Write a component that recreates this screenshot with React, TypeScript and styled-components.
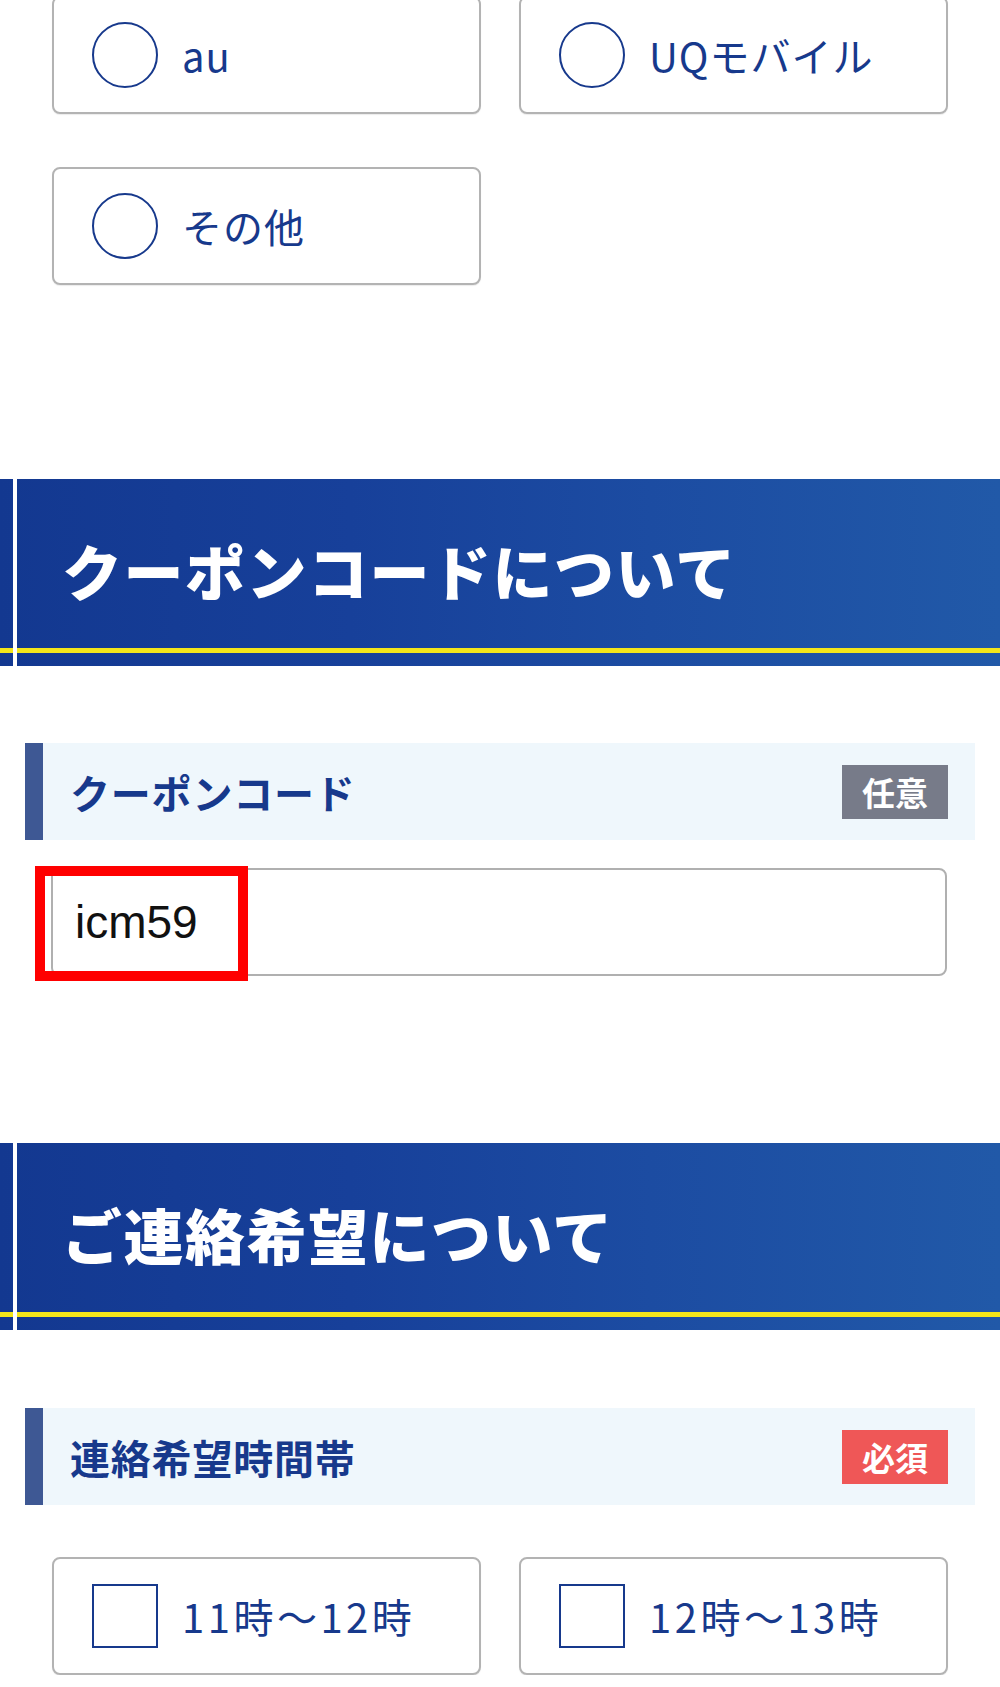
import React from "react";
import styled, { createGlobalStyle, css } from "styled-components";

const GlobalStyle = createGlobalStyle`
  html, body {
    margin: 0;
    padding: 0;
    background: #ffffff;
  }
  body {
    font-family: "Noto Sans CJK JP", "Noto Sans", sans-serif;
    color: #17398c;
  }
  * { box-sizing: border-box; }
`;

const Page = styled.div`
  width: 1000px;
  display: flex;
  flex-direction: column;
  overflow: hidden;
`;

const OptionGrid = styled.div<{ $mt: number }>`
  display: grid;
  grid-template-columns: 429px 429px;
  column-gap: 38px;
  row-gap: 53px;
  padding: 0 53px 0 52px;
  margin-top: ${(p) => p.$mt}px;
`;

const OptionBox = styled.label`
  height: 118px;
  border: 2px solid #b3b3b3;
  border-radius: 8px;
  background: #fff;
  display: flex;
  align-items: center;
  padding-left: 38px;
  box-shadow: 0 1px 1px rgba(0, 0, 0, 0.08);
`;

const Mark = styled.span<{ $shape: "radio" | "check" }>`
  flex: none;
  width: 66px;
  border: 2.5px solid #17398c;
  background: #fff;
  ${(p) =>
    p.$shape === "radio"
      ? css`
          height: 66px;
          border-radius: 50%;
        `
      : css`
          height: 64px;
          border-radius: 0;
        `}
`;

const OptionText = styled.span<{ $spacing: number }>`
  margin-left: 24px;
  font-size: 40px;
  line-height: 1;
  font-weight: 400;
  color: #17398c;
  letter-spacing: ${(p) => p.$spacing}px;
`;

const SectionHeader = styled.h2<{ $mt: number }>`
  margin: ${(p) => p.$mt}px 0 0 0;
  height: 187px;
  display: flex;
  align-items: center;
  padding-left: 62px;
  padding-bottom: 6px;
  font-size: 60px;
  font-weight: 900;
  line-height: 1;
  color: #ffffff;
  letter-spacing: 1.5px;
  background:
    linear-gradient(#ffffff, #ffffff) no-repeat 13px 0 / 4px 100%,
    linear-gradient(#f4e61a, #f4e61a) no-repeat 0 calc(100% - 13px) / 100% 5px,
    linear-gradient(90deg, #133890 0%, #17409a 35%, #1c4ca2 65%, #2159a8 100%);
`;

const FieldLabel = styled.div<{ $mt: number }>`
  margin: ${(p) => p.$mt}px 25px 0 25px;
  height: 97px;
  border-left: 18px solid #3e5894;
  background: #eff7fc;
  display: flex;
  align-items: center;
  justify-content: space-between;
  padding: 0 27px 0 27px;
`;

const LabelText = styled.span`
  font-size: 40px;
  font-weight: 700;
  line-height: 1;
  color: #17398c;
  letter-spacing: 0.8px;
`;

const Badge = styled.span<{ $kind: "optional" | "required" }>`
  height: 54px;
  width: 106px;
  display: flex;
  align-items: center;
  justify-content: center;
  font-size: 33px;
  font-weight: 700;
  color: #ffffff;
  background: ${(p) => (p.$kind === "optional" ? "#777b89" : "#ef5757")};
`;

const InputWrap = styled.div`
  position: relative;
  margin: 28px 53px 0 51px;
`;

const TextInput = styled.input`
  display: block;
  width: 100%;
  height: 108px;
  border: 2px solid #b0b0b0;
  border-radius: 8px;
  padding: 0 0 0 22px;
  font-family: "Liberation Sans", Arial, sans-serif;
  font-size: 46px;
  color: #111111;
  background: #fff;
  outline: none;
`;

const Highlight = styled.span`
  position: absolute;
  left: -16px;
  top: -2px;
  width: 213px;
  height: 115px;
  border: 10px solid #ff0000;
  pointer-events: none;
`;

type Opt = { label: string; spacing: number };

const carriers: Opt[] = [
  { label: "au", spacing: 1 },
  { label: "UQモバイル", spacing: 1 },
  { label: "その他", spacing: 1 },
];
const times: Opt[] = [
  { label: "11時〜12時", spacing: 3.5 },
  { label: "12時〜13時", spacing: 3.5 },
];

export default function App() {
  return (
    <>
      <GlobalStyle />
      <Page>
        <OptionGrid $mt={-4}>
          {carriers.map((o) => (
            <OptionBox key={o.label}>
              <Mark $shape="radio" />
              <OptionText $spacing={o.spacing}>{o.label}</OptionText>
            </OptionBox>
          ))}
        </OptionGrid>

        <SectionHeader $mt={194}>クーポンコードについて</SectionHeader>

        <FieldLabel $mt={77}>
          <LabelText>クーポンコード</LabelText>
          <Badge $kind="optional">任意</Badge>
        </FieldLabel>

        <InputWrap>
          <TextInput type="text" value="icm59" readOnly />
          <Highlight />
        </InputWrap>

        <SectionHeader $mt={167}>ご連絡希望について</SectionHeader>

        <FieldLabel $mt={78}>
          <LabelText>連絡希望時間帯</LabelText>
          <Badge $kind="required">必須</Badge>
        </FieldLabel>

        <OptionGrid $mt={52}>
          {times.map((o) => (
            <OptionBox key={o.label}>
              <Mark $shape="check" />
              <OptionText $spacing={o.spacing}>{o.label}</OptionText>
            </OptionBox>
          ))}
        </OptionGrid>
      </Page>
    </>
  );
}
